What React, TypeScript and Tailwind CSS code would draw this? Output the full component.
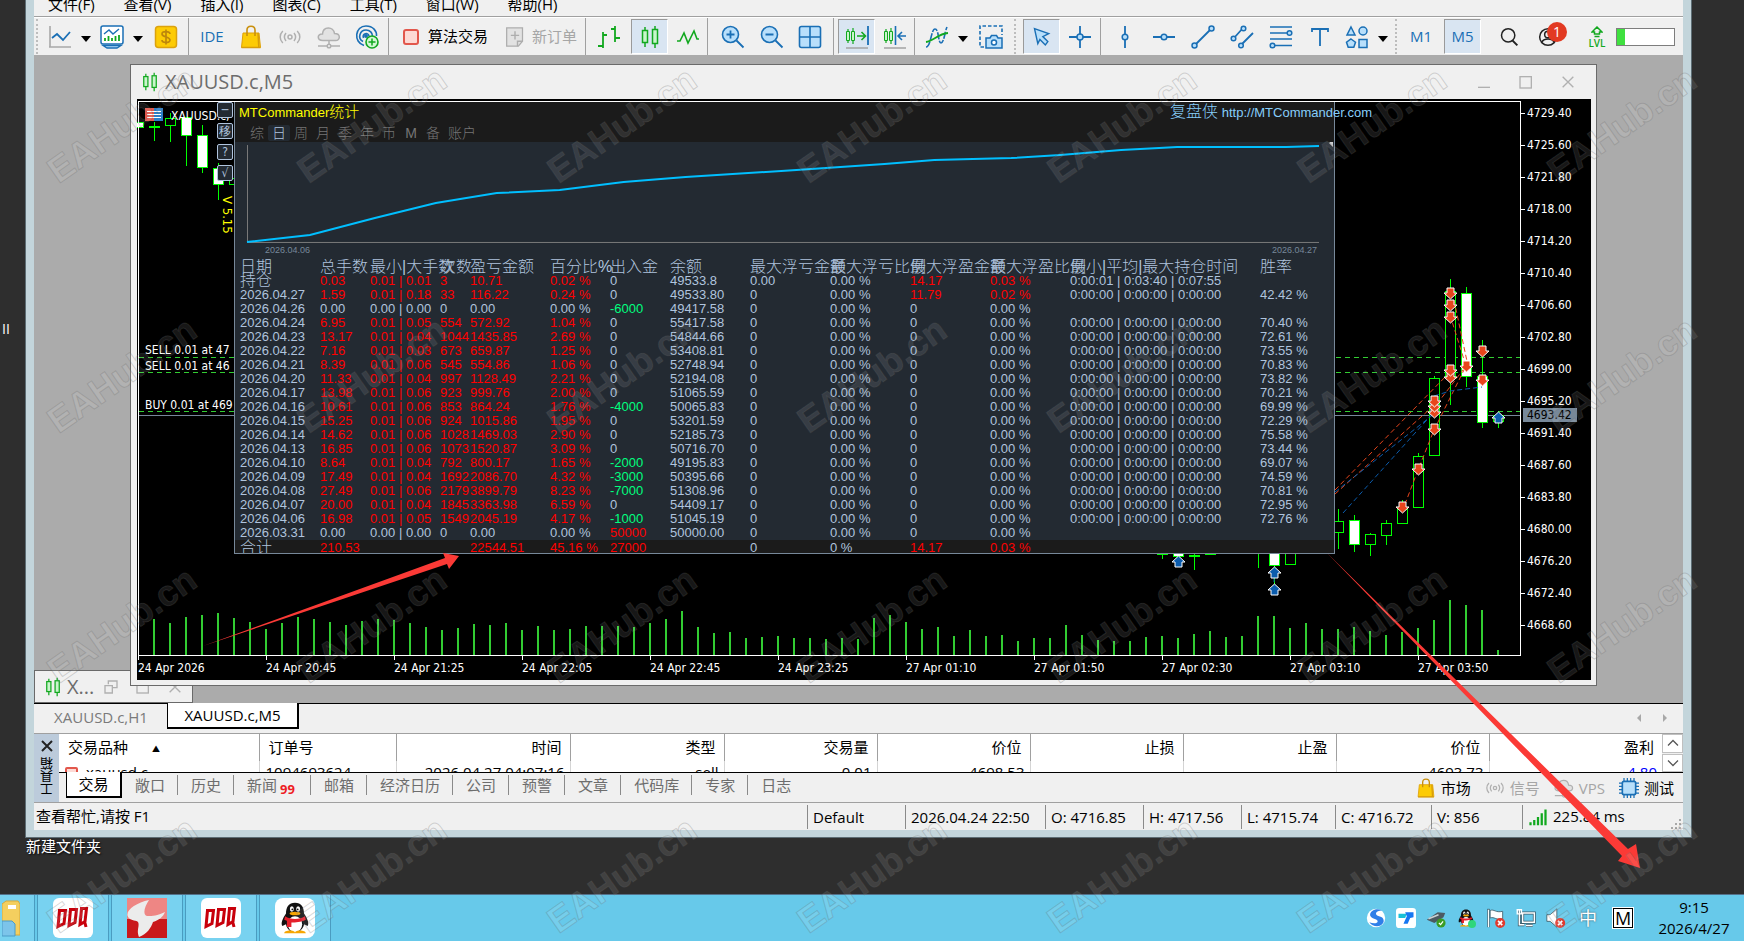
import type { ReactNode } from 'react';

const BLUE = '#1a6fb5';
const PALE = '#b8dffb';
const GREEN = '#12a81f';

/* ---------- data ---------- */

const menus = ['文件(F)', '查看(V)', '插入(I)', '图表(C)', '工具(T)', '窗口(W)', '帮助(H)'];

const prices = [
  '4729.40', '4725.60', '4721.80', '4718.00', '4714.20', '4710.40', '4706.60', '4702.80', '4699.00',
  '4695.20', '4691.40', '4687.60', '4683.80', '4680.00', '4676.20', '4672.40', '4668.60',
];

const times = [
  '24 Apr 2026', '24 Apr 20:45', '24 Apr 21:25', '24 Apr 22:05', '24 Apr 22:45', '24 Apr 23:25',
  '27 Apr 01:10', '27 Apr 01:50', '27 Apr 02:30', '27 Apr 03:10', '27 Apr 03:50',
];

const volumes = [
  37, 33, 39, 41, 43, 38, 34, 27, 33, 39, 37, 34, 31, 35, 37, 36, 33, 29, 26, 28, 32, 31, 33, 26, 30, 26, 27, 30, 30, 30, 29,
  33, 37, 45, 29, 23, 24, 18, 19, 20, 18, 18, 17, 18, 17, 38, 41, 34, 27, 29, 20, 26, 20, 21, 15, 18, 18, 31, 21, 16, 15, 15, 19,
  20, 18, 22, 25, 19, 20, 40, 40, 28, 33, 27, 27, 29, 25, 21, 24, 28, 36, 56, 51, 46, 6,
];

// x, high, body top, body bottom, low, filled
type Candle = [number, number, number, number, number, boolean];
const candles: Candle[] = [
  [138, 122, 122, 127, 127, true],
  [154, 122, 126, 127, 141, false],
  [170, 113, 118, 125, 142, false],
  [186, 117, 117, 135, 166, true],
  [202, 125, 135, 167, 173, true],
  [218, 163, 168, 184, 200, true],
  [234, 177, 178, 184, 184, false],
  [1162, 545, 553, 554, 559, false],
  [1178, 545, 548, 556, 558, true],
  [1194, 545, 555, 556, 570, false],
  [1210, 545, 553, 554, 554, false],
  [1258, 540, 545, 546, 568, false],
  [1274, 545, 548, 565, 595, true],
  [1290, 545, 548, 564, 564, false],
  [1338, 509, 521, 532, 549, false],
  [1354, 515, 520, 544, 552, true],
  [1370, 533, 534, 544, 556, false],
  [1386, 520, 523, 535, 545, false],
  [1402, 500, 507, 523, 523, false],
  [1418, 453, 456, 507, 507, false],
  [1434, 376, 378, 455, 455, false],
  [1450, 279, 291, 376, 405, false],
  [1466, 287, 293, 376, 387, true],
  [1482, 340, 376, 422, 428, true],
  [1498, 411, 415, 421, 428, false],
];

const sells: [number, number][] = [
  [1450, 293], [1450, 305], [1450, 317], [1450, 377], [1450, 370], [1466, 366], [1482, 351], [1482, 380],
  [1434, 412], [1434, 406], [1434, 401], [1434, 429], [1418, 469], [1402, 507],
];
const buys: [number, number][] = [[1178, 562], [1274, 573], [1274, 590], [1498, 418]];

const statHeads = [
  '日期', '总手数', '最小|大手数', '次数', '盈亏金额', '百分比%', '出入金', '余额',
  '最大浮亏金额', '最大浮亏比例', '最大浮盈金额', '最大浮盈比例', '最小|平均|最大持仓时间', '胜率',
];

const zeroTime = '0:00:00 | 0:00:00 | 0:00:00';

// date, lots, max lot, count, profit, percent, in/out, balance, win rate
const days: string[][] = [
  ['2026.04.26', '0.00', '0.00', '0', '0.00', '0.00', '-6000', '49417.58', ''],
  ['2026.04.24', '6.95', '0.05', '554', '572.92', '1.04', '0', '55417.58', '70.40 %'],
  ['2026.04.23', '13.17', '0.04', '1044', '1435.85', '2.69', '0', '54844.66', '72.61 %'],
  ['2026.04.22', '7.16', '0.03', '673', '659.87', '1.25', '0', '53408.81', '73.55 %'],
  ['2026.04.21', '8.39', '0.06', '545', '554.86', '1.06', '0', '52748.94', '70.83 %'],
  ['2026.04.20', '11.33', '0.04', '997', '1128.49', '2.21', '0', '52194.08', '73.82 %'],
  ['2026.04.17', '13.98', '0.06', '923', '999.76', '2.00', '0', '51065.59', '70.21 %'],
  ['2026.04.16', '10.61', '0.06', '853', '864.24', '1.76', '-4000', '50065.83', '69.99 %'],
  ['2026.04.15', '15.25', '0.06', '924', '1015.86', '1.95', '0', '53201.59', '72.29 %'],
  ['2026.04.14', '14.62', '0.06', '1028', '1469.03', '2.90', '0', '52185.73', '75.58 %'],
  ['2026.04.13', '16.85', '0.06', '1073', '1520.87', '3.09', '0', '50716.70', '73.44 %'],
  ['2026.04.10', '8.64', '0.04', '792', '800.17', '1.65', '-2000', '49195.83', '69.07 %'],
  ['2026.04.09', '17.49', '0.04', '1692', '2086.70', '4.32', '-3000', '50395.66', '74.59 %'],
  ['2026.04.08', '27.49', '0.06', '2179', '3899.79', '8.23', '-7000', '51308.96', '70.81 %'],
  ['2026.04.07', '20.00', '0.04', '1845', '3363.98', '6.59', '0', '54409.17', '72.95 %'],
  ['2026.04.06', '16.98', '0.05', '1549', '2045.19', '4.17', '-1000', '51045.19', '72.76 %'],
  ['2026.03.31', '0.00', '0.00', '0', '0.00', '0.00', '50000', '50000.00', ''],
];

const statRows: string[][] = [
  ['持仓', '0.03', '0.01 | 0.01', '3', '10.71', '0.02 %', '0', '49533.8', '0.00', '0.00 %', '14.17', '0.03 %', '0:00:01 | 0:03:40 | 0:07:55', ''],
  ['2026.04.27', '1.59', '0.01 | 0.18', '33', '116.22', '0.24 %', '0', '49533.80', '0', '0.00 %', '11.79', '0.02 %', zeroTime, '42.42 %'],
  ...days.map(([date, lots, max, count, profit, pct, flow, balance, rate]) => [
    date, lots, `${count === '0' ? '0.00' : '0.01'} | ${max}`, count, profit, `${pct} %`, flow, balance,
    '0', '0.00 %', '0', '0.00 %', rate ? zeroTime : '', rate,
  ]),
];

const totalRow = ['合计', '210.53', '', '', '22544.51', '45.16 %', '27000', '', '0', '0 %', '14.17', '0.03 %', '', ''];

function cellColor(col: number, value: string) {
  const plain = col === 0 || col === 7 || col > 11;
  if (plain) return 'text-[#b0c4de]';
  if (value.startsWith('-')) return 'text-[#00ff7f]';
  // amounts of zero stay neutral
  return parseFloat(value.split('|').pop() ?? '0') === 0 ? 'text-[#b0c4de]' : 'text-[#ff0000]';
}

/* ---------- small pieces ---------- */

function Ico({ children, size = 'size-6' }: { children: ReactNode; size?: string }) {
  return (
    <svg viewBox="0 0 24 24" fill="none" className={`${size} shrink-0`} aria-hidden="true">
      {children}
    </svg>
  );
}

function Tool({ label, width, active, children }: { label: string; width: string; active?: boolean; children: ReactNode }) {
  return (
    <button
      aria-label={label}
      className={`flex h-[35px] shrink-0 items-center justify-center ${width} ${
        active ? 'border border-b-white border-r-white border-l-[#9a9a9a] border-t-[#9a9a9a] bg-[#d9e5f2]' : ''
      }`}
    >
      {children}
    </button>
  );
}

const Sep = () => <span className="h-[37px] w-[2px] shrink-0 border-l border-[#a0a0a0]" />;
const Grip = () => <span className="h-[35px] w-[3px] shrink-0 border-l-2 border-dotted border-[#bdbdbd]" />;

function Caret({ width = 'w-[10px]' }: { width?: string }) {
  return (
    <button aria-label="更多" className={`flex shrink-0 items-center justify-center pt-1 ${width}`}>
      <svg viewBox="0 0 10 6" className="w-[10px] shrink-0" aria-hidden="true">
        <path d="M0 0h10L5 6z" fill="#000" />
      </svg>
    </button>
  );
}

const CandleGlyph = () => (
  <g stroke={GREEN} strokeWidth="1.5" fill="#c9f5cc">
    <path d="M7 2v3M7 18v4M17 1v3M17 19v4" />
    <rect x="4.5" y="5.5" width="5" height="12" />
    <rect x="14.5" y="4.5" width="5" height="14" />
  </g>
);

const Bag = () => (
  <>
    <path d="M4 8h16l1.500 14.500h-19z" fill="#fccb05" stroke="#dfa106" />
    <path d="M8 11V5c0-5 8-5 8 0v6" stroke="#c98f0c" strokeWidth="1.6" />
    <path d="M2.500 22.500h19M19 8l.8 14" stroke="#d79d0a" strokeWidth="1.5" />
  </>
);

const Signal = () => (
  <g stroke="#b0b0b0" strokeWidth="1.5">
    <circle cx="12" cy="12" r="2" />
    <path d="M8 8c-2 2.500-2 5.500 0 8M16 8c2 2.500 2 5.500 0 8M4.800 6c-3.500 3.500-3.500 8.500 0 12M19.200 6c3.500 3.500 3.500 8.500 0 12" />
  </g>
);

const Cloud = () => (
  <g stroke="#b0b0b0" strokeWidth="1.5">
    <path d="M6 15.500C-.5 15.500 0 8.500 5.500 9 6 1 16.500 1 17.500 8.500c6.500 0 6 7 1 7z" fill="#e2e2e2" />
    <path d="M12 15.500v4M1 21h9M14 21h9" />
    <circle cx="12" cy="21" r="1.800" />
  </g>
);

/* ---------- toolbar ---------- */

function Toolbar() {
  return (
    <div className="flex h-[37px] shrink-0 items-center bg-[#f0f0f0] pl-[2px]">
      <Grip />
      <Tool label="图表" width="w-[42px]">
        <Ico>
          <path d="M2 1v21M1 22h22" stroke="#a8a8a8" strokeWidth="1.6" />
          <path d="M4 13l5-4 6 6 7-8" stroke={BLUE} strokeWidth="1.8" />
        </Ico>
      </Tool>
      <Caret />
      <Tool label="窗口" width="w-[42px]">
        <Ico>
          <rect x="1" y="1" width="22" height="18" rx="2" fill="#fff" stroke={BLUE} strokeWidth="1.5" />
          <path d="M4 9l5-4 4 4 6-5" stroke={BLUE} strokeWidth="1.4" />
          <path d="M5 16v-3M8.500 16v-5M12 16v-3M15.500 16v-5M19 16v-6" stroke={GREEN} strokeWidth="1.800" />
          <path d="M3 20.500l4 2.500h10l4-2.500z" fill={PALE} stroke={BLUE} strokeWidth="1.300" />
        </Ico>
      </Tool>
      <Caret />
      <Tool label="报价" width="w-[45px]">
        <Ico>
          <rect x="1.500" y="1.500" width="21" height="21" rx="3" fill="#fdcb05" stroke="#dca20d" strokeWidth="1.500" />
          <path d="M12 4.500v15M16 9c0-3-8-3.500-8 0s8 2.500 8 6-8 3-8 0" stroke="#bd860c" strokeWidth="1.700" />
        </Ico>
      </Tool>
      <Sep />
      <Tool label="IDE" width="w-[44px]">
        <span className="text-[15px] text-[#1a6fb5]">IDE</span>
      </Tool>
      <Tool label="市场" width="w-[34px]"><Ico><Bag /></Ico></Tool>
      <Tool label="信号" width="w-[44px]"><Ico><Signal /></Ico></Tool>
      <Tool label="虚拟主机" width="w-[34px]"><Ico><Cloud /></Ico></Tool>
      <Tool label="社区" width="w-[42px]">
        <Ico>
          <g stroke={BLUE} strokeWidth="1.600">
            <path d="M9 20.500C-2 17 0 1 11 1c7 0 11 5 10.500 10" />
            <path d="M8 16.500C2 13 5 5 11 5c4 0 6.500 3 6.500 6" />
            <path d="M8.500 13C7 9 13 6.500 14 11" />
          </g>
          <circle cx="11" cy="11" r="2" fill={BLUE} />
          <circle cx="17" cy="17" r="6" fill="#d3f8d5" stroke={GREEN} strokeWidth="1.600" />
          <path d="M17 13.500v7M13.500 17h7" stroke={GREEN} strokeWidth="1.500" />
        </Ico>
      </Tool>
      <Sep />
      <button className="flex w-[107px] shrink-0 items-center gap-[9px] pl-[13px] whitespace-nowrap">
        <span className="size-4 shrink-0 rounded-[3px] border-2 border-[#e2574c] bg-[#fddad5]" />
        算法交易
      </button>
      <button className="flex w-[88px] shrink-0 items-center gap-[7px] pl-[8px] whitespace-nowrap text-[#a6a6a6]">
        <Ico size="size-5">
          <path d="M2 1h19v16l-5 6H2z" fill="#e2e2e2" stroke="#adadad" strokeWidth="1.500" />
          <path d="M12 5v10M7 10h10M15 23v-6h6" stroke="#adadad" strokeWidth="1.700" />
        </Ico>
        新订单
      </button>
      <Sep />
      <Tool label="柱形图" width="w-[44px]">
        <Ico>
          <path d="M6 7v16M1 21h5M6 10h4M18 1v16M14 4h4M18 13h5" stroke={GREEN} strokeWidth="1.800" />
        </Ico>
      </Tool>
      <Tool label="蜡烛图" width="w-[37px]" active><Ico><CandleGlyph /></Ico></Tool>
      <Tool label="线形图" width="w-[39px]">
        <Ico><path d="M1 16h3l4-8 4 10 6-12 3 8h2" stroke={GREEN} strokeWidth="1.600" /></Ico>
      </Tool>
      <Sep />
      <Tool label="放大" width="w-[48px]">
        <Ico>
          <circle cx="9.500" cy="9.500" r="8" fill={PALE} stroke={BLUE} strokeWidth="1.600" />
          <path d="M15.500 15.500l7 7M9.500 5.500v8M5.500 9.500h8" stroke={BLUE} strokeWidth="1.800" />
        </Ico>
      </Tool>
      <Tool label="缩小" width="w-[30px]">
        <Ico>
          <circle cx="9.500" cy="9.500" r="8" fill={PALE} stroke={BLUE} strokeWidth="1.600" />
          <path d="M15.500 15.500l7 7M5.500 9.500h8" stroke={BLUE} strokeWidth="1.800" />
        </Ico>
      </Tool>
      <Tool label="平铺" width="w-[46px]">
        <Ico>
          <rect x="1.500" y="1.500" width="21" height="21" rx="2" fill={PALE} stroke={BLUE} strokeWidth="1.600" />
          <path d="M12 1v22M1 12h22" stroke={BLUE} strokeWidth="1.600" />
        </Ico>
      </Tool>
      <Sep />
      <span className="w-[3px] shrink-0" />
      <Tool label="自动滚动" width="w-[37px]" active>
        <Ico>
          <path d="M3 4v14M8 3v16" stroke={GREEN} strokeWidth="1.200" />
          <path d="M1.500 6.500h3v9h-3zM6.500 6.500h3v9h-3z" stroke={GREEN} fill="#c9f5cc" />
          <path d="M12 11h8M16.500 7l4 4-4 4" stroke={GREEN} strokeWidth="1.600" />
          <path d="M23 1v19" stroke={BLUE} strokeWidth="1.800" />
          <path d="M1 23h22" stroke="#a8a8a8" strokeWidth="1.600" />
        </Ico>
      </Tool>
      <Tool label="图表平移" width="w-[39px]">
        <Ico>
          <path d="M3 4v14M8 3v16" stroke={GREEN} strokeWidth="1.200" />
          <path d="M1.500 6.500h3v9h-3zM6.500 6.500h3v9h-3z" stroke={GREEN} fill="#c9f5cc" />
          <path d="M12.500 1v19M23 11h-7M19 7l-4 4 4 4" stroke={BLUE} strokeWidth="1.600" />
          <path d="M1 23h22" stroke="#a8a8a8" strokeWidth="1.600" />
        </Ico>
      </Tool>
      <Sep />
      <Tool label="指标" width="w-[42px]">
        <Ico>
          <path d="M1 22c5 0 5-18 9-18s3 14 6 14 4-12 6-16" stroke={BLUE} strokeWidth="1.600" strokeDasharray="7 1.500" />
          <path d="M1 17c7-1 12-8 22-9" stroke={GREEN} strokeWidth="1.800" />
        </Ico>
      </Tool>
      <Caret />
      <Tool label="截图" width="w-[46px]">
        <Ico>
          <path d="M5 22H1V1h22v9" stroke={BLUE} strokeWidth="1.600" strokeDasharray="3.500 2" />
          <path d="M7 13h4l1.500-2.500h5L19 13h4v10H7z" fill={PALE} stroke={BLUE} strokeWidth="1.500" />
          <circle cx="15" cy="17.500" r="2.500" fill="#fff" stroke={BLUE} strokeWidth="1.500" />
        </Ico>
      </Tool>
      <Grip />
      <span className="w-[6px] shrink-0" />
      <Tool label="光标" width="w-[37px]" active>
        <Ico size="size-5"><path d="M3 2l17 6-7 3.500 6 6-3 4-6.500-6.500L7 20z" fill={PALE} stroke={BLUE} strokeWidth="1.700" /></Ico>
      </Tool>
      <Tool label="十字准线" width="w-[40px]">
        <Ico>
          <path d="M12 1v8M12 15v8M1 12h8M15 12h8" stroke={BLUE} strokeWidth="1.800" />
          <circle cx="12" cy="12" r="3" fill={PALE} stroke={BLUE} strokeWidth="1.500" />
        </Ico>
      </Tool>
      <Sep />
      <Tool label="垂直线" width="w-[46px]">
        <Ico>
          <path d="M12 1v8M12 15v8" stroke={BLUE} strokeWidth="1.800" />
          <circle cx="12" cy="12" r="2.800" fill={PALE} stroke={BLUE} strokeWidth="1.500" />
        </Ico>
      </Tool>
      <Tool label="水平线" width="w-[32px]">
        <Ico>
          <path d="M1 12h8M15 12h8" stroke={BLUE} strokeWidth="1.800" />
          <circle cx="12" cy="12" r="2.800" fill={PALE} stroke={BLUE} strokeWidth="1.500" />
        </Ico>
      </Tool>
      <Tool label="趋势线" width="w-[46px]">
        <Ico>
          <path d="M5 19L19 5" stroke={BLUE} strokeWidth="1.800" />
          <circle cx="3.500" cy="20.500" r="2.500" fill={PALE} stroke={BLUE} strokeWidth="1.500" />
          <circle cx="20.500" cy="3.500" r="2.500" fill={PALE} stroke={BLUE} strokeWidth="1.500" />
        </Ico>
      </Tool>
      <Tool label="通道" width="w-[32px]">
        <Ico>
          <path d="M4 13l9-10M11 20L23 8" stroke={BLUE} strokeWidth="1.800" />
          <g fill={PALE} stroke={BLUE} strokeWidth="1.500">
            <circle cx="3.500" cy="13.500" r="2.300" />
            <circle cx="13.500" cy="3.500" r="2.300" />
            <circle cx="11" cy="20.500" r="2.300" />
          </g>
        </Ico>
      </Tool>
      <Tool label="斐波那契" width="w-[46px]">
        <Ico>
          <path d="M1 2h22M1 8h18M1 14h22M6 20.500h17" stroke={BLUE} strokeWidth="1.700" />
          <g fill={PALE} stroke={BLUE} strokeWidth="1.500">
            <circle cx="20.500" cy="8" r="2.300" />
            <circle cx="3.500" cy="20.500" r="2.300" />
          </g>
        </Ico>
      </Tool>
      <Tool label="文本" width="w-[32px]">
        <Ico><path d="M4 7V4h16v3M12 4v17" stroke={BLUE} strokeWidth="1.800" /></Ico>
      </Tool>
      <Tool label="图形" width="w-[42px]">
        <Ico>
          <g fill={PALE} stroke={BLUE} strokeWidth="1.500">
            <path d="M6 2l4 8H2zM6 14l4.500 3.200-1.700 5H3.200l-1.700-5z" />
            <circle cx="18" cy="6" r="4" />
            <rect x="14" y="14.500" width="8" height="8" />
          </g>
        </Ico>
      </Tool>
      <Caret />
      <span className="w-[7px] shrink-0" />
      <Grip />
      <button className="w-[46px] shrink-0 text-[15px] text-[#1a6fb5]">M1</button>
      <Tool label="M5" width="w-[37px]" active>
        <span className="text-[15px] text-[#1a6fb5]">M5</span>
      </Tool>
      <Tool label="搜索" width="w-[55px]">
        <Ico size="size-5">
          <circle cx="11" cy="10" r="8" stroke="#222" strokeWidth="1.800" />
          <path d="M16 16l6 6" stroke="#222" strokeWidth="2.400" />
        </Ico>
      </Tool>
      <button aria-label="通知" className="relative flex w-[24px] shrink-0 items-center justify-center">
        <Ico size="size-5">
          <circle cx="12" cy="12" r="10" stroke="#222" strokeWidth="1.800" />
          <circle cx="12" cy="9" r="4" stroke="#222" strokeWidth="1.800" />
          <path d="M4 19c3-6 13-6 16 0" stroke="#222" strokeWidth="1.800" />
        </Ico>
        <span className="absolute -top-[5px] left-[11px] size-5 rounded-full bg-[#e23a22] text-sm leading-5 text-white">1</span>
      </button>
      <button className="ml-[25px] flex w-[24px] shrink-0 flex-col items-center text-[10px] leading-[10px] font-semibold text-[#12a81f]">
        <Ico size="size-3"><path d="M12 2l10 10h-5v4H7v-4H2zM7 21h10" stroke={GREEN} strokeWidth="3" /></Ico>
        LVL
      </button>
      <span className="mr-2 ml-auto h-[18px] w-[59px] shrink-0 border border-[#7d7d7d] bg-white">
        <span className="block h-full w-2 bg-[#3fe03f]" />
      </span>
    </div>
  );
}

/* ---------- statistics panel ---------- */

const modes = ['综', '日', '周', '月', '季', '年', '币', 'M', '备', '账户'];

function StatRow({ cells, className = '' }: { cells: string[]; className?: string }) {
  return (
    <tr className={className}>
      {cells.map((cell, i) => (
        <td key={i} className={`h-[14px] p-0 ${cellColor(i, cell)} ${/^[持合]/.test(cell) ? 'text-base leading-[14px] font-light' : ''}`}>
          {cell}
        </td>
      ))}
    </tr>
  );
}

function StatsPanel() {
  return (
    <section className="absolute top-[3px] left-[97px] h-[452px] w-[1101px] border-x border-b border-[#778899] bg-[#232a32] font-['Liberation_Sans','Noto_Sans_CJK_SC',sans-serif] text-[13px] leading-[14px] whitespace-nowrap">
      <header className="flex h-10 flex-col gap-[3px] bg-[#1b1b1b]">
        <div className="flex h-5 items-center justify-between pl-1">
          <h2 className="text-[#ffff00]">
            MTCommander<span className="text-[15px] font-light">统计</span>
          </h2>
          {/* the link runs past the panel's right edge */}
          <a href="#site" className="-mr-[38px] text-[#87cefa]">
            <span className="text-base leading-[14px] font-light">复盘侠</span> http://MTCommander.com
          </a>
        </div>
        <nav className="flex pl-[11px] text-sm text-[#767676]">
          {modes.map((mode) => (
            <button
              key={mode}
              className={`h-4 min-w-[22px] px-1 leading-4 font-light ${mode === '日' ? 'rounded-xs bg-[#232a32] text-[#b0c4de]' : ''}`}
            >
              {mode}
            </button>
          ))}
        </nav>
      </header>

      <svg viewBox="235 142 1100 117" className="block h-[117px] w-full" aria-label="净值曲线">
        <path d="M247.500 145V242.500H1320" stroke="#7a7a7a" fill="none" />
        <polyline
          fill="none"
          stroke="#00bfff"
          strokeWidth="2"
          points="247,242 310,235 375,218 436,203 497,193 560,190 624,182 686,177 797,170 885,164 935,160 1012,158 1061,155 1122,150 1160,148 1178,147 1287,147 1320,146"
        />
        <path d="M1334 139v8l-4-4z" fill="#d0d0d0" />
        <g fill="#778899" fontSize="9">
          <text x="265" y="253">2026.04.06</text>
          <text x="1273" y="253">2026.04.27</text>
        </g>
      </svg>

      <div className="h-[294px] overflow-hidden">
        <table className="w-full table-fixed border-collapse text-left">
          <colgroup>
            <col className="w-[85px]" />
            <col className="w-[50px]" />
            <col className="w-[70px]" />
            <col className="w-[30px]" />
            <col className="w-[80px]" />
            <col className="w-[60px]" />
            <col className="w-[60px]" />
            <col className="w-[80px]" />
            <col className="w-[80px]" />
            <col className="w-[80px]" />
            <col className="w-[80px]" />
            <col className="w-[80px]" />
            <col className="w-[190px]" />
            <col />
          </colgroup>
          <thead>
            <tr className="text-base leading-[15px] text-[#b0c4de]">
              {statHeads.map((head) => (
                <th key={head} className="p-0 font-light first:pl-[5px]">{head}</th>
              ))}
            </tr>
          </thead>
          <tbody className="[&_td:first-child]:pl-[5px]">
            {statRows.map((cells) => (
              <StatRow key={cells[0]} cells={cells} />
            ))}
            <StatRow cells={totalRow} className="bg-[#1b1b1b] [&>td]:pt-[1px]" />
          </tbody>
        </table>
      </div>
    </section>
  );
}

/* ---------- price chart ---------- */

function Plot() {
  return (
    <svg viewBox="137 99 1384 557" preserveAspectRatio="xMinYMin slice" className="absolute inset-0 h-full w-full" aria-label="XAUUSD.c M5">
      <g fill="#32cd32">
        {volumes.map((h, i) => (
          <rect key={i} x={153 + i * 16} y={656 - h} width="2" height={h} />
        ))}
      </g>
      <path d="M139 357.500H1521M139 372.500H1521M139 411.500H1521" stroke="#32cd32" strokeDasharray="5 4" />
      <path d="M139 415.500H1521" stroke="#778899" />
      {candles.map(([x, high, top, bottom, low, filled]) => (
        <g key={x} stroke="#00ff00" fill={filled ? '#fff' : '#000'}>
          <path d={`M${x + 0.5} ${high}V${low}`} />
          <rect x={x - 4.5} y={top + 0.5} width="10" height={bottom - top} />
        </g>
      ))}
      <g fill="none" strokeDasharray="5 3">
        <path
          d="M1335 490L1450 372M1335 494L1440 400L1466 366M1402 512L1418 470L1434 430L1466 366M1450 315L1466 366M1454 300L1468 366"
          stroke="#e8451c"
        />
        <path d="M1335 492L1434 414M1343 513L1434 412M1434 396L1450 391L1482 387M1274 590V566" stroke="#0b5cad" />
      </g>
      <g fill="#e8451c" stroke="#fff">
        {sells.map(([x, y]) => (
          <path key={`${x}-${y}`} d={`M${x - 3} ${y - 5}h7v5h3l-6.500 6l-6.500 -6h3z`} />
        ))}
      </g>
      <g fill="#0b5cad" stroke="#fff">
        {buys.map(([x, y]) => (
          <path key={`${x}-${y}`} d={`M${x - 3} ${y + 5}h7v-5h3l-6.500 -6l-6.500 6h3z`} />
        ))}
      </g>
      <g fill="#fff" fontSize="12">
        <text x="171" y="120">XAUUSD.c,</text>
        <text x="145" y="354">SELL 0.01 at 47</text>
        <text x="145" y="370">SELL 0.01 at 46</text>
        <text x="145" y="409">BUY 0.01 at 469</text>
      </g>
      <rect x="145" y="108" width="9" height="13" fill="#e2574c" />
      <rect x="154" y="108" width="9" height="13" fill="#2a7fc9" />
      <path d="M147 111.500h14M147 114.500h14M147 117.500h14" stroke="#fff" />
      <text transform="translate(223 196) rotate(90)" fill="#ffff00" fontSize="13">V 5.15</text>
    </svg>
  );
}

function SideButtons() {
  return (
    <div className="absolute top-[3px] left-[80px] flex flex-col gap-[5px] text-xs text-[#b0c4de]">
      {['─', '移', '?', '√'].map((glyph) => (
        <button key={glyph} className="h-4 w-4 rounded-xs border border-[#b0c4de] bg-[#232a32] leading-3">
          {glyph}
        </button>
      ))}
    </div>
  );
}

function ChartWindow() {
  return (
    <section className="relative mt-[9px] mr-[86px] mb-[17px] ml-[96px] flex flex-1 flex-col border border-[#6a6a6a] bg-[#f0f0f0] pr-[5px] pb-[5px] pl-[6px]">
      <header className="flex h-[34px] items-center gap-[5px] pl-[3px]">
        <Ico size="size-5"><CandleGlyph /></Ico>
        <h1 className="text-xl text-[#6d6d6d]">XAUUSD.c,M5</h1>
        <div className="mr-[15px] ml-auto flex gap-[26px]">
          <button aria-label="最小化"><Ico size="size-4"><path d="M3 20h18" stroke="#b0b0b0" strokeWidth="2" /></Ico></button>
          <button aria-label="最大化"><Ico size="size-4"><rect x="3" y="4" width="17" height="17" stroke="#b0b0b0" strokeWidth="2" /></Ico></button>
          <button aria-label="关闭"><Ico size="size-4"><path d="M4 4l16 16M20 4L4 20" stroke="#b0b0b0" strokeWidth="2" /></Ico></button>
        </div>
      </header>
      <div className="flex flex-1 flex-col bg-black font-['DejaVu_Sans_Condensed','Roboto',sans-serif] text-xs text-white">
        <div className="flex flex-1">
          <div className="relative flex-1">
            <Plot />
            <div className="pointer-events-none absolute top-[2px] right-0 bottom-0 left-px border border-white" />
            <SideButtons />
            <StatsPanel />
          </div>
          <ul className="relative w-[70px]">
            {prices.map((price) => (
              <li key={price} className="flex h-8 items-start">
                <span className="mt-[14px] h-px w-1 bg-white" />
                <span className="mt-[7px] pl-[2px] leading-[15px]">{price}</span>
              </li>
            ))}
            <li className="absolute top-[309px] left-[2px] w-[54px] bg-[#778899] pl-[4px] leading-[14px] text-black">4693.42</li>
          </ul>
        </div>
        <ul className="flex h-6 pl-px">
          {times.map((time) => (
            <li key={time} className="w-32 shrink-0 whitespace-nowrap">
              <span className="block h-1 w-px bg-white" />
              <span className="block leading-[17px]">{time}</span>
            </li>
          ))}
        </ul>
      </div>
    </section>
  );
}

function MinimizedWindow() {
  return (
    <div className="absolute bottom-0 left-0 flex h-[33px] w-[159px] items-center border border-[#6a6a6a] bg-[#f0f0f0] pl-2 text-[#6d6d6d]">
      <Ico size="size-5"><CandleGlyph /></Ico>
      <span className="ml-1 w-[36px] text-xl">X...</span>
      <div className="flex gap-4">
        <button aria-label="还原">
          <Ico size="size-4"><path d="M8 8V3h13v10h-6M3 10h11v11H3z" stroke="#b0b0b0" strokeWidth="2" /></Ico>
        </button>
        <button aria-label="最大化"><Ico size="size-4"><rect x="3" y="4" width="17" height="17" stroke="#b0b0b0" strokeWidth="2" /></Ico></button>
        <button aria-label="关闭"><Ico size="size-4"><path d="M4 4l16 16M20 4L4 20" stroke="#b0b0b0" strokeWidth="2" /></Ico></button>
      </div>
    </div>
  );
}

/* ---------- toolbox ---------- */

const tradeCols = [
  { head: '交易品种', value: 'xauusd.c', width: 'w-[200px]' },
  { head: '订单号', value: '1094693624', width: 'w-[137px]' },
  { head: '时间', value: '2026.04.27 04:07:16', width: 'w-[174px]' },
  { head: '类型', value: 'sell', width: 'w-[154px]' },
  { head: '交易量', value: '0.01', width: 'w-[153px]' },
  { head: '价位', value: '4698.53', width: 'w-[153px]' },
  { head: '止损', value: '', width: 'w-[153px]' },
  { head: '止盈', value: '', width: 'w-[153px]' },
  { head: '价位', value: '4693.73', width: 'w-[153px]' },
  { head: '盈利', value: '4.80', width: '' },
];

const toolTabs = ['敞口', '历史', '新闻', '邮箱', '经济日历', '公司', '预警', '文章', '代码库', '专家', '日志'];

function Toolbox() {
  return (
    <div className="flex h-[69px] shrink-0 border-t border-[#a0a0a0] bg-[#f0f0f0]">
      <aside className="flex w-[25px] shrink-0 flex-col items-center bg-[#bccbdb] pt-[6px]">
        <button aria-label="关闭工具箱">
          <Ico size="size-3"><path d="M2 2l20 20M22 2L2 22" stroke="#222" strokeWidth="4" /></Ico>
        </button>
        <span className="mt-[5px] rotate-180 text-[13px] leading-5 whitespace-nowrap [writing-mode:vertical-rl]">工具箱</span>
      </aside>
      <div className="flex min-w-0 flex-1 flex-col">
        <div className="flex h-[38px] overflow-hidden bg-white">
          <table className="flex-1 table-fixed border-collapse text-right">
            <thead>
              <tr>
                {tradeCols.map((col, i) => (
                  <th key={i} className={`h-[27px] p-0 font-normal ${col.width} ${i < 2 ? 'pl-[9px] text-left' : 'pr-2'} ${i < 9 ? 'border-r border-[#a0a0a0]' : ''}`}>
                    {col.head}
                    {i === 0 && <span className="pl-6 align-middle text-[8px]">▲</span>}
                  </th>
                ))}
              </tr>
            </thead>
            <tbody>
              <tr>
                {tradeCols.map((col, i) => (
                  <td key={i} className={`h-[22px] p-0 leading-[22px] ${i < 2 ? 'pl-[6px] text-left' : 'pr-[5px]'} ${i < 9 ? 'border-r border-[#d4d4d4]' : 'text-[#0000ff]'}`}>
                    {i === 0 && <span className="mr-2 inline-block size-[13px] rounded-xs border-2 border-[#e2574c] bg-[#fddad5] align-middle" />}
                    {col.value}
                  </td>
                ))}
              </tr>
            </tbody>
          </table>
          <div className="flex w-[21px] flex-col gap-px bg-[#f0f0f0]">
            <button aria-label="向上滚动" className="flex flex-1 items-center justify-center border border-[#c0c0c0] bg-white">
              <Ico size="size-3"><path d="M2 17l10-10 10 10" stroke="#555" strokeWidth="2.500" /></Ico>
            </button>
            <button aria-label="向下滚动" className="flex flex-1 items-center justify-center border border-[#c0c0c0] bg-white">
              <Ico size="size-3"><path d="M2 7l10 10L22 7" stroke="#555" strokeWidth="2.500" /></Ico>
            </button>
          </div>
        </div>
        <div className="flex h-[30px] items-start border-t border-black pl-[7px] text-[#6d6d6d]">
          <button className="-mt-px h-[26px] w-[56px] border border-t-0 border-r-2 border-b-2 border-black bg-white text-black">交易</button>
          {toolTabs.map((tab, i) => (
            <button key={tab} className="flex h-6 items-center">
              <span className="px-[13px] leading-6 whitespace-nowrap">
                {tab}
                {tab === '新闻' && <b className="ml-[3px] inline-block w-[18px] translate-y-[3px] text-left text-[13px] leading-4 text-[#ee1c24]">99</b>}
              </span>
              {i < toolTabs.length - 1 && <span className="-ml-px h-5 w-px bg-[#8a8a8a]" />}
            </button>
          ))}
          <div className="mt-[3px] mr-[9px] ml-auto flex items-center gap-[14px] leading-6 whitespace-nowrap">
            <button className="flex items-center gap-[5px] text-black"><Ico size="size-5"><Bag /></Ico>市场</button>
            <button className="flex items-center gap-[5px] text-[#a6a6a6]"><Ico size="size-5"><Signal /></Ico>信号</button>
            <button className="flex items-center gap-[5px] text-[#a6a6a6]"><Ico size="size-5"><Cloud /></Ico>VPS</button>
            <button className="flex items-center gap-[5px] text-black">
              <Ico size="size-5">
                <path d="M6 0v24M10 0v24M14 0v24M18 0v24M0 6h24M0 10h24M0 14h24M0 18h24" stroke={BLUE} strokeWidth="1.500" />
                <rect x="4" y="4" width="16" height="16" rx="2" fill={PALE} stroke={BLUE} strokeWidth="2" />
              </Ico>
              测试
            </button>
          </div>
        </div>
      </div>
    </div>
  );
}

const status = [
  { text: 'Default', width: 'w-[98px]' },
  { text: '2026.04.24 22:50', width: 'w-[140px]' },
  { text: 'O: 4716.85', width: 'w-[98px]' },
  { text: 'H: 4717.56', width: 'w-[98px]' },
  { text: 'L: 4715.74', width: 'w-[94px]' },
  { text: 'C: 4716.72', width: 'w-[96px]' },
  { text: 'V: 856', width: 'w-[91px]' },
];

function StatusBar() {
  return (
    <footer className="flex h-[28px] shrink-0 items-center border-t border-[#a0a0a0] bg-[#f0f0f0] whitespace-nowrap">
      <span className="flex-1 pl-[2px]">查看帮忙,请按 F1</span>
      {status.map((item) => (
        <span key={item.text} className={`h-6 border-l border-[#8a8a8a] pl-[5px] leading-6 ${item.width}`}>{item.text}</span>
      ))}
      <span className="flex h-6 w-[161px] items-center gap-[6px] border-l border-[#8a8a8a] pl-[6px]">
        <Ico size="size-[18px]">
          <path d="M2 23v-4M7 23v-7M12 23V12M17 23V7M22 23V2" stroke={GREEN} strokeWidth="3" />
        </Ico>
        225.84 ms
        <svg viewBox="0 0 12 12" className="mt-auto mr-px ml-auto size-3" aria-hidden="true">
          <path d="M1 11h2M5 11h2M9 11h2M5 7h2M9 7h2M9 3h2" stroke="#a8a8a8" strokeWidth="2" />
        </svg>
      </span>
    </footer>
  );
}

/* ---------- desktop taskbar ---------- */

const DddLogo = () => (
  <svg viewBox="0 0 40 40" className="size-10" aria-hidden="true">
    <rect width="40" height="40" rx="6" fill="#fff" />
    <g fill="none" stroke="#c8000b" strokeWidth="3">
      <path d="M5 12.500h7.500l-1.500 13-6 3 1.500-16" />
      <path d="M16 11.500h7.500l-1.500 13-6 3 1.500-16" />
      <path d="M27 10.500h6.500l-1.500 13-5 3 1.500-16M32 25l1 4" />
    </g>
  </svg>
);

const BirdLogo = () => (
  <svg viewBox="0 0 40 40" className="size-10" aria-hidden="true">
    <rect width="40" height="40" fill="#c9181b" />
    <rect width="40" height="21" fill="#ee8684" />
    <path d="M22 2C8 5-4 14 2 20c2 3 8 2 9 4 2 4-2 8 1 15 8-3 12-9 14-15 6-2 10-5 12-10-8 4-12 4-18 4-5-2-2-10 2-16z" fill="#ececec" />
  </svg>
);

const Penguin = ({ className }: { className: string }) => (
  <svg viewBox="0 0 40 40" className={className} aria-hidden="true">
    <path d="M20 3c-7 0-10 5-10 12-4 6-6 11-4 14l4-2c0 3 3 6 5 8h10c2-2 5-5 5-8l4 2c2-3 0-8-4-14 0-7-3-12-10-12z" fill="#111" />
    <ellipse cx="20" cy="27" rx="8" ry="9" fill="#fff" />
    <ellipse cx="16.500" cy="10" rx="2.200" ry="3" fill="#fff" />
    <ellipse cx="23.500" cy="10" rx="2.200" ry="3" fill="#fff" />
    <circle cx="17" cy="10.500" r="1" fill="#111" />
    <circle cx="23" cy="10.500" r="1" fill="#111" />
    <ellipse cx="20" cy="15" rx="6" ry="2" fill="#f7a600" />
    <path d="M9 18c6 4 16 4 22 0l1 4c-6 3-11 3-16 3v5h-5v-7l-3-1z" fill="#e5202c" />
    <path d="M8 37c0-4 11-4 12-1 1-3 12-3 12 1z" fill="#f7a600" />
  </svg>
);

const tasks = [
  { name: '量化客户端', icon: <DddLogo /> },
  { name: '证券', icon: <BirdLogo /> },
  { name: '量化客户端 2', icon: <DddLogo /> },
  {
    name: 'QQ',
    icon: (
      <span className="flex size-10 items-center justify-center rounded-lg bg-white">
        <Penguin className="size-9" />
      </span>
    ),
  },
];

const Cross = () => (
  <>
    <circle cx="17" cy="18" r="6" fill="#e03a2f" />
    <path d="M14.500 15.500l5 5M19.500 15.500l-5 5" stroke="#fff" strokeWidth="2" />
  </>
);

function Taskbar() {
  return (
    <div className="flex h-[47px] shrink-0 items-stretch border-t border-[#54718a] bg-[#67c9ea]">
      <button aria-label="文件夹" className="flex w-[35px] items-end border-r border-[#4a9cc0] bg-[#78d2f0] pb-1 pl-[2px]">
        <svg viewBox="0 0 18 38" className="w-[18px]" aria-hidden="true">
          <path d="M0 5l4-3h12l2 3v31H0z" fill="#f4cf5f" stroke="#d7a93a" />
          <path d="M6 6h8v4H6z" fill="#fff" />
          <path d="M0 22h10l3 3v12H0z" fill="#7cc4ea" stroke="#4a9cc8" />
        </svg>
      </button>
      {tasks.map((task) => (
        <button
          key={task.name}
          aria-label={task.name}
          className="ml-[2px] flex w-[72px] items-center justify-center border-x border-[#4a9cc0] bg-[#78d2f0]"
        >
          {task.icon}
        </button>
      ))}
      <div className="mr-[13px] ml-auto flex items-center">
        <div className="flex items-center gap-[10px] pr-[24px]">
          <Ico size="size-5">
            <circle cx="12" cy="12" r="11" fill="#fff" />
            <path d="M19 3C12-1 4 4 5 9c1 4 9 4 9 7s-6 3-10 1c4 6 14 7 17 0 2-8-9-6-9-10 0-3 4-4 7-4z" fill="#2f7fe8" />
          </Ico>
          <Ico size="size-5">
            <rect width="24" height="24" rx="4" fill="#fff" />
            <path d="M3 7h10l-2 5H3z" fill="#19c0d8" />
            <path d="M11 5h10v6l-4 1-3 7h-5l4-9z" fill="#1677f2" />
          </Ico>
          <Ico size="size-5">
            <path d="M1 14L14 5l9 1-2 5-11 7z" fill="#4c5a62" />
            <path d="M3 13l12-5" stroke="#c9d2d6" strokeWidth="2" />
            <circle cx="18" cy="18" r="5.500" fill="#3a9d23" />
            <path d="M15.500 18l2 2 3-4" stroke="#fff" strokeWidth="1.500" />
          </Ico>
          <span className="relative">
            <Penguin className="size-5" />
            <span className="absolute right-0 bottom-0 size-2 rounded-full bg-[#2fd67a]" />
          </span>
          <Ico size="size-5">
            <path d="M3 1v22" stroke="#3b5a68" strokeWidth="3" />
            <path d="M3 2v21" stroke="#fff" strokeWidth="1.500" />
            <path d="M5 3c5-2 6 3 15 1v9c-8 2-10-3-15-1z" fill="#fff" stroke="#3b5a68" />
            <Cross />
          </Ico>
          <Ico size="size-5">
            <g stroke="#3b5a68" strokeWidth="3.500"><path d="M8 6h14v11H8zM12 21h8M4 2v18h6" /></g>
            <g stroke="#fff" strokeWidth="1.700"><path d="M8 6h14v11H8zM12 21h8M4 2v18h6M1.500 2h5v5h-5z" /></g>
          </Ico>
          <Ico size="size-5">
            <path d="M1 8h4l8-7v22l-8-7H1z" fill="#fff" stroke="#3b5a68" />
            <Cross />
          </Ico>
          <span className="w-6 text-center text-lg text-white [text-shadow:0_0_2px_#2a4a58]">中</span>
          <span className="ml-[3px] flex size-5 items-center justify-center border border-black bg-white text-lg leading-none text-black outline outline-white">M</span>
        </div>
        <time className="w-[74px] text-center leading-[21px]">
          9:15
          <br />
          2026/4/27
        </time>
      </div>
    </div>
  );
}

/* ---------- overlays ---------- */

const marks = [125, 375, 625, 875].flatMap((y) => [122, 372, 622, 872, 1122, 1372, 1622].map((x) => [x, y]));

function Overlay() {
  return (
    <svg viewBox="0 0 1744 941" preserveAspectRatio="xMinYMin meet" className="pointer-events-none absolute inset-0 h-full w-full" aria-hidden="true">
      <g fill="#fb3a36">
        <path d="M203 646L445 558l-2-5 16 3-10 13-2-5z" />
        <path d="M1327 553L1628 849l8-5 4 24-22-7 4-5z" />
      </g>
      <g
        fill="#fff"
        fillOpacity="0.1"
        stroke="#646464"
        strokeOpacity="0.26"
        textAnchor="middle"
        fontSize="36"
        className="font-['Liberation_Sans',sans-serif] font-bold"
      >
        {marks.map(([x, y]) => (
          <text key={`${x}-${y}`} transform={`translate(${x} ${y}) rotate(-35)`} dy="12">
            EAHub.cn
          </text>
        ))}
      </g>
    </svg>
  );
}

export default function App() {
  return (
    <div className="relative flex min-h-screen flex-col overflow-hidden bg-[#2e2e2e] font-['Open_Sans','Noto_Sans_CJK_SC',sans-serif] text-[15px] text-black">
      <span className="absolute top-[319px] left-[2px] text-sm text-white">II</span>
      <main className="mr-[52px] ml-[25px] flex flex-1 flex-col border-x border-b border-[#5d6d74]">
        <div className="flex flex-1 flex-col border-x-8 border-b-[7px] border-[#c3d5db]">
          <nav className="flex h-[17px] shrink-0 items-center gap-[29px] overflow-hidden border-b border-[#a0a0a0] bg-[#f0f0f0] pb-[8px] pl-[14px] whitespace-nowrap">
            {menus.map((menu) => (
              <button key={menu} className="leading-5">{menu}</button>
            ))}
          </nav>
          <div className="h-px shrink-0 bg-white" />
          <Toolbar />
          <div className="relative flex flex-1 flex-col bg-[#ababab]">
            <MinimizedWindow />
            <ChartWindow />
          </div>
          <div className="flex h-[30px] shrink-0 items-start border-t border-black bg-[#f0f0f0]">
            <button className="w-[133px] pt-[3px] pl-[1px] leading-5 text-[#7a7a7a]">XAUUSD.c,H1</button>
            <button className="-mt-px h-[26px] w-[132px] border border-t-0 border-r-2 border-b-2 border-black bg-white">XAUUSD.c,M5</button>
            <div className="mt-[8px] mr-[12px] ml-auto flex gap-[14px]">
              <button aria-label="向左"><Ico size="size-3"><path d="M16 4v16l-8-8z" fill="#a8a8a8" /></Ico></button>
              <button aria-label="向右"><Ico size="size-3"><path d="M8 4v16l8-8z" fill="#a8a8a8" /></Ico></button>
            </div>
          </div>
          <Toolbox />
          <StatusBar />
        </div>
      </main>
      <div className="h-[56px] shrink-0 pl-[26px] leading-4 text-white [text-shadow:1px_1px_2px_#000]">新建文件夹</div>
      <Taskbar />
      <Overlay />
    </div>
  );
}
